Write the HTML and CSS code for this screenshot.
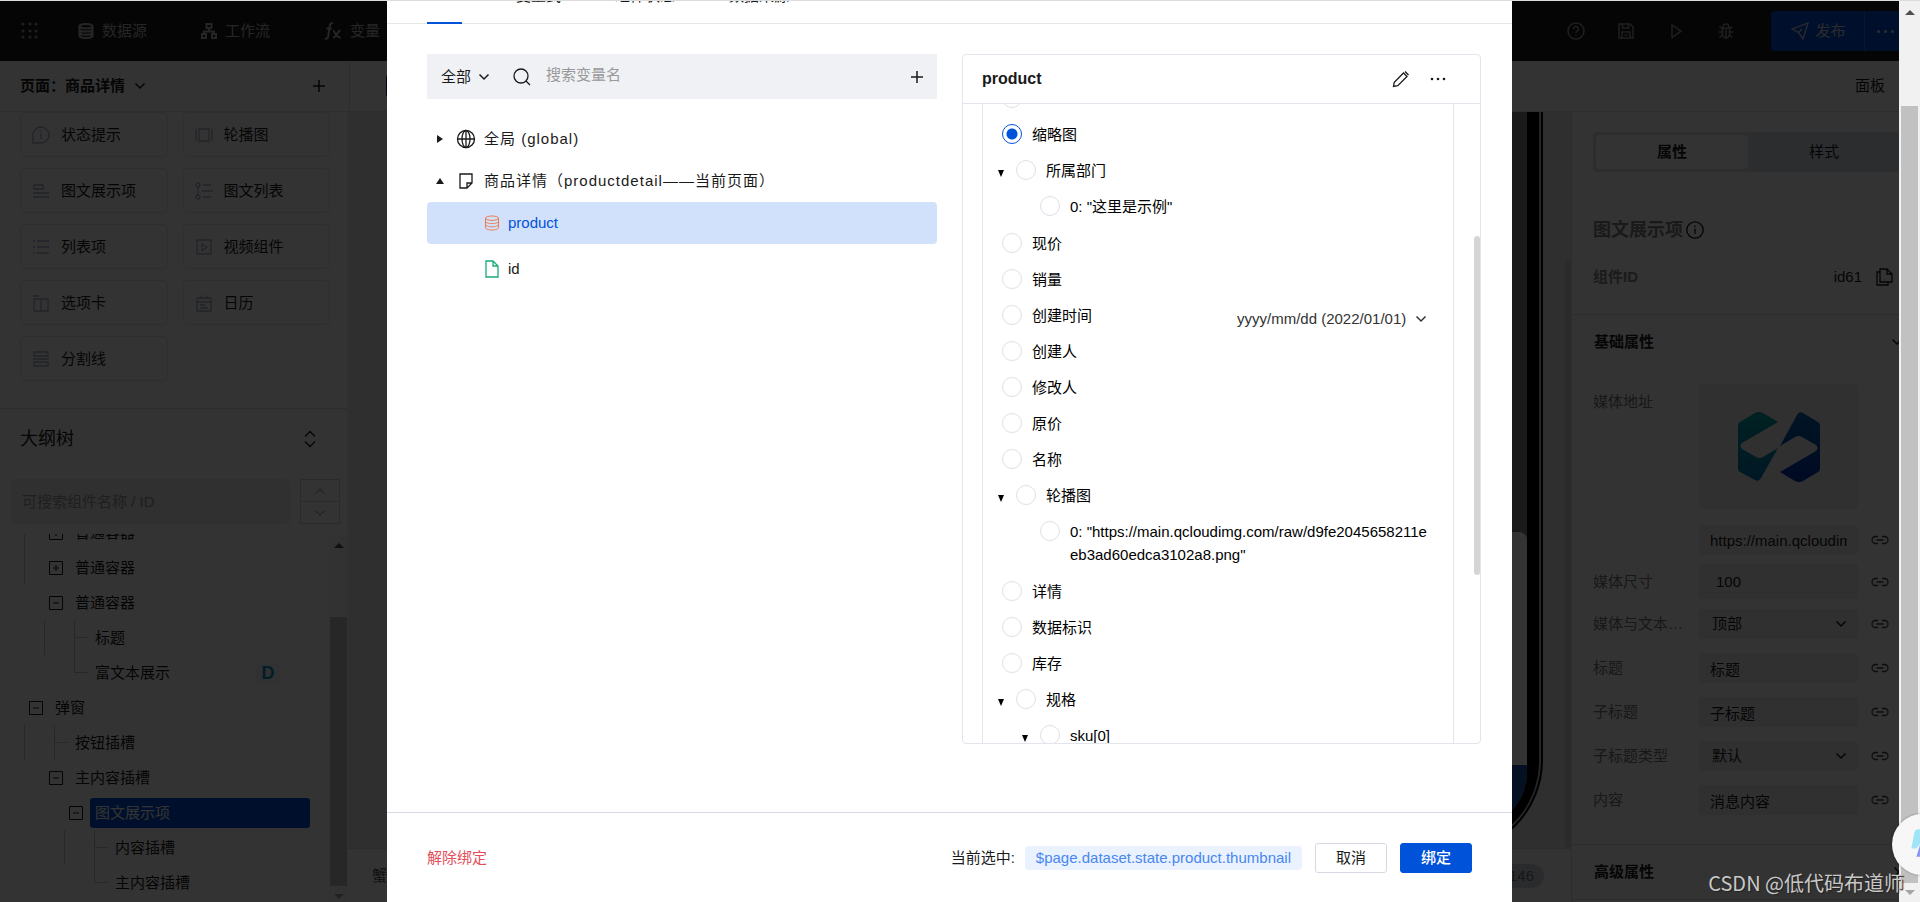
FILE: index.html
```html
<!DOCTYPE html>
<html lang="zh-CN">
<head>
<meta charset="utf-8">
<title>变量绑定</title>
<link rel="stylesheet" href="styles.css">
</head>
<body>
<svg class="sprite" aria-hidden="true">
  <symbol id="chev" viewBox="0 0 12 12"><path d="M1.500 3.500l4.500 4.500 4.500-4.500"/></symbol>
  <symbol id="plus" viewBox="0 0 12 12"><path d="M6 0v12M0 6h12"/></symbol>
  <symbol id="db" viewBox="0 0 16 16"><ellipse cx="8" cy="3.200" rx="6.500" ry="2.200"/><path d="M1.500 3.200v9.600c0 1.200 2.900 2.200 6.500 2.200s6.500-1 6.500-2.200V3.200M1.500 6.400c0 1.200 2.900 2.200 6.500 2.200s6.500-1 6.500-2.200M1.500 9.600c0 1.200 2.900 2.200 6.500 2.200s6.500-1 6.500-2.200"/></symbol>
  <symbol id="link" viewBox="0 0 18 10"><path d="M7 1.500H4.500a3.500 3.500 0 0 0 0 7H7M11 1.500h2.500a3.500 3.500 0 0 1 0 7H11M5.500 5h7"/></symbol>
  <symbol id="minus-box" viewBox="0 0 14 14"><path d="M.5.5h13v13H.5zM4 7h6"/></symbol>
  <symbol id="plus-box" viewBox="0 0 14 14"><path d="M.5.5h13v13H.5zM4 7h6M7 4v6"/></symbol>
</svg>

<div class="stage">
  <div class="app">
    <header class="topbar">
      <svg class="i dots" viewBox="0 0 18 18"><g fill="currentColor" stroke="none"><circle cx="2" cy="2" r="1.500"/><circle cx="9" cy="2" r="1.500"/><circle cx="15" cy="2" r="1.500"/><circle cx="2" cy="9" r="1.500"/><circle cx="9" cy="9" r="1.500"/><circle cx="15" cy="9" r="1.500"/><circle cx="2" cy="15" r="1.500"/><circle cx="9" cy="15" r="1.500"/><circle cx="15" cy="15" r="1.500"/></g></svg>
      <nav class="topnav">
        <a href="#"><svg class="i i16 bold"><use href="#db"/></svg>数据源</a>
        <a href="#"><svg class="i i16 bold" viewBox="0 0 16 16"><path d="M5.500 1h5v4h-5zM1 11h4v4H1zM11 11h4v4h-4zM8 5v3.500M3 11V8.500h10V11"/></svg>工作流</a>
        <a href="#"><svg class="i i18 bold" viewBox="0 0 18 18"><path d="M9 1.500C6 .5 5.800 3 5.400 6L4.300 14c-.4 2.600-1.500 3.200-3.500 2.500M2.500 6.500h5.500M9 8.500c2 0 2.500 7.500 7.500 7M16.500 8.500c-3 0-4 7.500-7.500 7"/></svg>变量</a>
      </nav>
      <div class="tools">
        <svg class="i i18" viewBox="0 0 18 18"><circle cx="9" cy="9" r="8"/><path d="M6.500 7a2.500 2.500 0 1 1 3.600 2.200c-.8.4-1.100.8-1.100 1.800M9 12.500v1.300"/></svg>
        <svg class="i i18" viewBox="0 0 18 18"><path d="M2 2h11l3 3v11H2zM5.500 2v4h6V2M5 16v-6h8v6M7.500 13h3"/></svg>
        <svg class="i i18" viewBox="0 0 18 18"><path d="M5 3v12.500l9-6.300z"/></svg>
        <svg class="i i18" viewBox="0 0 18 18"><path d="M5.500 6h7v6a3.500 4 0 0 1-7 0zM6 5.500a3 3.500 0 0 1 6 0M9 7v8.500M1.500 10h4M12.500 10h4M2.500 4.500l3 2.500M15.500 4.500l-3 2.500M2.500 15.500l3-2.500M15.500 15.500l-3-2.500"/></svg>
      </div>
      <button class="publish"><svg class="i i18" viewBox="0 0 18 18"><path d="M1 7L17 1l-5 16-4.500-6.500zM7.500 10.500L11 7"/></svg>发布</button>
      <button class="publish-more" aria-label="更多"><span></span><span></span><span></span></button>
    </header>

    <div class="subbar">
      <div class="page-pick"><strong>页面：商品详情</strong><svg class="i i12"><use href="#chev"/></svg><svg class="i i12 end"><use href="#plus"/></svg></div>
      <div class="subbar-main"><span class="device"></span><span class="end">面板</span></div>
    </div>

    <div class="work">
      <aside class="left">
        <div class="parts">
          <div class="part"><svg class="i i18" viewBox="0 0 18 18"><path d="M1 17v-8a8 8 0 1 1 8 8zM9 7.500V13M9 4.500v1.500"/></svg>状态提示</div>
          <div class="part"><svg class="i i18" viewBox="0 0 18 18"><path d="M4 3h10v12H4zM1 3v12M17 3v12"/></svg>轮播图</div>
          <div class="part"><svg class="i i18" viewBox="0 0 18 18"><path d="M2 3h9v4H2zM1 11h16M1 15h16"/></svg>图文展示项</div>
          <div class="part"><svg class="i i18" viewBox="0 0 18 18"><circle cx="3" cy="3" r="2"/><circle cx="3" cy="15" r="2"/><path d="M3 5v8M8 3h8M7 9h11M8 15h8"/></svg>图文列表</div>
          <div class="part"><svg class="i i18" viewBox="0 0 18 18"><path d="M1 3h2M5 3h12M1 9h2M5 9h12M1 15h2M5 15h12"/></svg>列表项</div>
          <div class="part"><svg class="i i18" viewBox="0 0 18 18"><path d="M2 2h14v14H2zM7 6v6.500l5-3.300z"/></svg>视频组件</div>
          <div class="part"><svg class="i i18" viewBox="0 0 18 18"><path d="M2 5h14v12H2zM9 5v12M1 2h6"/></svg>选项卡</div>
          <div class="part"><svg class="i i18" viewBox="0 0 18 18"><path d="M2 4h14v13H2zM2 8h14M6 1.500V5M12 1.500V5M5 11h5M5 14h8"/></svg>日历</div>
          <div class="part"><svg class="i i18" viewBox="0 0 18 18"><path d="M2 2h14v4H2zM2 12h14v4H2zM1 9h16"/></svg>分割线</div>
        </div>
        <div class="outline-head"><h2>大纲树</h2><svg class="i i18" viewBox="0 0 18 18"><path d="M4 6.500L9 1.500l5 5M4 11.500l5 5 5-5"/></svg></div>
        <div class="outline-search">
          <input type="text" aria-label="搜索组件" placeholder="可搜索组件名称 / ID">
          <div class="stepper"><button aria-label="上一个"><svg class="i i12 flip"><use href="#chev"/></svg></button><button aria-label="下一个"><svg class="i i12"><use href="#chev"/></svg></button></div>
        </div>
        <div class="outline">
          <ul class="otree">
            <li class="l2"><i class="rail on"></i><svg class="i i14"><use href="#plus-box"/></svg><span>普通容器</span></li>
            <li class="l2"><i class="rail on"></i><svg class="i i14"><use href="#plus-box"/></svg><span>普通容器</span></li>
            <li class="l2"><i class="rail"></i><svg class="i i14"><use href="#minus-box"/></svg><span>普通容器</span></li>
            <li class="l3"><i class="rail wide on"></i><i class="twig mid"></i><span>标题</span></li>
            <li class="l3"><i class="rail wide"></i><i class="twig"></i><span>富文本展示</span><b class="badge">D</b></li>
            <li class="l1"><i class="rail"></i><svg class="i i14"><use href="#minus-box"/></svg><span>弹窗</span></li>
            <li class="l2"><i class="rail wide on"></i><i class="twig mid"></i><span>按钮插槽</span></li>
            <li class="l2"><i class="rail"></i><svg class="i i14"><use href="#minus-box"/></svg><span>主内容插槽</span></li>
            <li class="l3"><i class="rail"></i><svg class="i i14"><use href="#minus-box"/></svg><span class="picked">图文展示项</span></li>
            <li class="l4"><i class="rail wide on"></i><i class="twig mid"></i><span>内容插槽</span></li>
            <li class="l4"><i class="rail wide"></i><i class="twig"></i><span>主内容插槽</span></li>
          </ul>
          <div class="bar bar-left"><i class="tri up"></i><i class="thumb"></i><i class="tri down"></i></div>
        </div>
      </aside>

      <main class="canvas">
        <div class="board">
          <div class="phone"><div class="bezel"><div class="screen"><div class="sheet"></div></div></div></div>
          <i class="board-thumb"></i>
        </div>
        <div class="crumbs"><span>蟹</span><b>146</b></div>
      </main>

      <aside class="right">
        <div class="seg"><button class="on">属性</button><button>样式</button></div>
        <h3>图文展示项<svg class="i i18" viewBox="0 0 18 18"><circle cx="9" cy="9" r="8.200"/><path d="M9 7.500V13M9 4.500v1.500"/></svg></h3>
        <div class="idrow"><strong>组件ID</strong><span>id61</span><svg class="i i18" viewBox="0 0 18 18"><path d="M5 1h7l5 5v8H5zM12 1v5h5M5 4H2v13h11v-3"/></svg></div>
        <div class="group"><strong>基础属性</strong><svg class="i i12"><use href="#chev"/></svg></div>
        <div class="fields">
          <div class="field tall"><span class="lab">媒体地址</span>
            <div class="pic"><svg viewBox="0 0 82 70"><defs><linearGradient id="ga" x1="0" y1="0" x2="0" y2="1"><stop offset="0" stop-color="#00a3a3"/><stop offset="1" stop-color="#0077b8"/></linearGradient><linearGradient id="gb" x1="0" y1="0" x2="0" y2="1"><stop offset="0" stop-color="#0068b8"/><stop offset="1" stop-color="#0030b0"/></linearGradient></defs>
              <path fill="url(#ga)" d="M2 10L17 1q4-2 8 0l15 9-36 21q-3 3 0 6l14 8q3 2 7 0l15-9-17 30q-2 4-6 2L2 60q-2-1-2-4V14q0-3 2-4z"/>
              <path fill="url(#gb)" d="M80 60L65 69q-4 2-8 0l-15-9 36-21q3-3 0-6l-14-8q-3-2-7 0l-15 9L59 3q2-4 6-2l15 9q2 1 2 4v42q0 3-2 4z"/></svg></div></div>
          <div class="field"><label class="lab" for="f0"></label><input id="f0" aria-label="媒体地址" value="https://main.qcloudimg.com"><svg class="i lk"><use href="#link"/></svg></div>
          <div class="field big"><label class="lab" for="f1">媒体尺寸</label><input id="f1" value="100"><svg class="i lk"><use href="#link"/></svg></div>
          <div class="field"><label class="lab" for="f2">媒体与文本布局</label><div class="sel"><select id="f2"><option>顶部</option></select><svg class="i i12"><use href="#chev"/></svg></div><svg class="i lk"><use href="#link"/></svg></div>
          <div class="field"><label class="lab" for="f3">标题</label><input id="f3" value="标题"><svg class="i lk"><use href="#link"/></svg></div>
          <div class="field"><label class="lab" for="f4">子标题</label><input id="f4" value="子标题"><svg class="i lk"><use href="#link"/></svg></div>
          <div class="field"><label class="lab" for="f5">子标题类型</label><div class="sel"><select id="f5"><option>默认</option></select><svg class="i i12"><use href="#chev"/></svg></div><svg class="i lk"><use href="#link"/></svg></div>
          <div class="field"><label class="lab" for="f6">内容</label><input id="f6" value="消息内容"><svg class="i lk"><use href="#link"/></svg></div>
        </div>
        <div class="group last"><strong>高级属性</strong><svg class="i i12 turn"><use href="#chev"/></svg></div>
      </aside>
    </div>
  </div>

  <div class="mask">
    <section class="modal" role="dialog" aria-label="变量绑定">
      <nav class="tabs"><button class="on" aria-label="变量"></button><button>变量式</button><button>组件状态</button><button>数据来源</button></nav>
      <div class="body">
        <div class="vars">
          <div class="search">
            <div class="scope"><select aria-label="范围"><option>全部</option></select><svg class="i i12"><use href="#chev"/></svg></div>
            <svg class="i i18" viewBox="0 0 18 18"><circle cx="8" cy="8" r="7"/><path d="M13 13l4 4"/></svg>
            <input type="text" aria-label="搜索变量名" placeholder="搜索变量名">
            <button class="plain" aria-label="新增"><svg class="i i12"><use href="#plus"/></svg></button>
          </div>
          <ul class="vtree">
            <li class="node"><i class="car side"></i><svg class="i i20" viewBox="0 0 20 20"><circle cx="10" cy="10" r="8.500"/><ellipse cx="10" cy="10" rx="4" ry="8.500"/><path d="M1.500 10h17M10 1.500v17"/></svg><span>全局 (global)</span></li>
            <li class="node"><i class="car top"></i><svg class="i i20" viewBox="0 0 20 20"><path d="M4 3h12v9l-5 5H4zM16 12h-5v5"/></svg><span>商品详情（productdetail——当前页面）</span></li>
            <li class="leaf on"><svg class="i i16 orange"><use href="#db"/></svg>product</li>
            <li class="leaf"><svg class="i i18 green" viewBox="0 0 16 18"><path d="M2 1h7l5 5v11H2zM9 1v5h5"/></svg>id</li>
          </ul>
        </div>

        <div class="detail">
          <div class="detail-head"><h2>product</h2>
            <button class="plain" aria-label="编辑"><svg class="i i18" viewBox="0 0 18 18"><path d="M1.500 16.500l.8-4.300L11.500 3l3.500 3.500-9.200 9.200zM13 1.500L16.500 5"/></svg></button>
            <button class="plain" aria-label="更多"><svg class="i i16" viewBox="0 0 16 16"><g fill="currentColor" stroke="none"><circle cx="2" cy="8" r="1.300"/><circle cx="8" cy="8" r="1.300"/><circle cx="14" cy="8" r="1.300"/></g></svg></button>
          </div>
          <div class="detail-body">
            <ul class="props">
              <li><label class="prop"><input type="radio" name="p" aria-label="标识"></label></li>
              <li><label class="prop"><input type="radio" name="p" checked><span>缩略图</span></label></li>
              <li><label class="prop open"><i class="caret"></i><input type="radio" name="p"><span>所属部门</span></label>
                <ul><li><label class="prop"><input type="radio" name="p"><span>0: "这里是示例"</span></label></li></ul></li>
              <li><label class="prop"><input type="radio" name="p"><span>现价</span></label></li>
              <li><label class="prop"><input type="radio" name="p"><span>销量</span></label></li>
              <li class="dated"><label class="prop"><input type="radio" name="p"><span>创建时间</span></label>
                <div class="fmt"><select aria-label="时间格式"><option>yyyy/mm/dd (2022/01/01)</option></select><svg class="i i12"><use href="#chev"/></svg></div></li>
              <li><label class="prop"><input type="radio" name="p"><span>创建人</span></label></li>
              <li><label class="prop"><input type="radio" name="p"><span>修改人</span></label></li>
              <li><label class="prop"><input type="radio" name="p"><span>原价</span></label></li>
              <li><label class="prop"><input type="radio" name="p"><span>名称</span></label></li>
              <li><label class="prop open"><i class="caret"></i><input type="radio" name="p"><span>轮播图</span></label>
                <ul><li><label class="prop"><input type="radio" name="p"><span>0: "https://main.qcloudimg.com/raw/d9fe2045658211eeb3ad60edca3102a8.png"</span></label></li></ul></li>
              <li><label class="prop"><input type="radio" name="p"><span>详情</span></label></li>
              <li><label class="prop"><input type="radio" name="p"><span>数据标识</span></label></li>
              <li><label class="prop"><input type="radio" name="p"><span>库存</span></label></li>
              <li><label class="prop open"><i class="caret"></i><input type="radio" name="p"><span>规格</span></label>
                <ul><li><label class="prop open"><i class="caret"></i><input type="radio" name="p"><span>sku[0]</span></label></li></ul></li>
            </ul>
            <i class="detail-thumb"></i>
          </div>
        </div>
      </div>
      <footer class="foot">
        <button class="unbind">解除绑定</button>
        <span class="cur">当前选中:</span><code>$page.dataset.state.product.thumbnail</code>
        <button class="btn">取消</button><button class="btn primary">绑定</button>
      </footer>
    </section>
  </div>
</div>

<div class="bar bar-page"><i class="tri up"></i><i class="thumb"></i><i class="tri down"></i></div>
<div class="fab"><svg viewBox="0 0 60 60"><path fill="#a0e4f7" d="M22 18q1-3 4-3h34v14H28l-4 5h-5z"/><path fill="#8a96f5" d="M28 29h32v13H24z"/></svg></div>
<div class="mark">CSDN @低代码布道师</div>
</body>
</html>
```
FILE: styles.css
```css
* { box-sizing: border-box; }
html, body { height: 100%; }
body {
  margin: 0;
  display: flex;
  position: relative;
  overflow: hidden;
  border-top: 1px solid #dcdcdc;
  font: 15px/24px "Liberation Sans", "Noto Sans CJK SC", sans-serif;
  color: #1a1a1a;
}
ul { list-style: none; margin: 0; padding: 0; }
h2, h3 { margin: 0; }
button, input, select { font: inherit; color: inherit; margin: 0; }
button, select { appearance: none; border: 0; background: none; padding: 0; }
a { color: inherit; text-decoration: none; }
.sprite { position: absolute; width: 0; height: 0; }
.i { fill: none; stroke: currentColor; flex: none; display: block; }
.i.bold { stroke-width: 2; }
.i12 { width: 12px; height: 12px; stroke-width: 1.500; }
.i14 { width: 14px; height: 14px; }
.i16 { width: 16px; height: 16px; }
.i18 { width: 18px; height: 18px; stroke-width: 1.300; }
.i20 { width: 20px; height: 20px; stroke-width: 1.300; }
.flip { transform: rotate(180deg); }
.turn { transform: rotate(-90deg); }
.end { margin-left: auto; }

.stage { position: relative; flex: 1; min-width: 0; overflow: hidden; }
.app { height: 100%; display: flex; flex-direction: column; background: #fff; }

.topbar { flex: none; height: 60px; display: flex; align-items: center; background: #1a1a1a; color: #d8d8d8; overflow: hidden; }
.dots { width: 18px; height: 18px; margin: 0 39px 0 21px; color: #999; }
.topnav { display: flex; gap: 54px; }
.topnav a { display: flex; align-items: center; gap: 8px; color: #bbb; }
.topnav .i { stroke-width: 2; }
.tools { display: flex; gap: 32px; margin: 0 36px 0 auto; color: #999; }
.tools .i { stroke-width: 1.500; }
.publish { height: 40px; width: 94px; display: flex; align-items: center; justify-content: center; gap: 6px; padding-left: 2px; background: #0052d9; border-radius: 4px 0 0 4px; border-right: 1px solid #2a6ae0; }
.publish-more { height: 40px; width: 34px; display: flex; align-items: center; gap: 4px; padding-left: 12px; background: #0052d9; }
.publish-more span { width: 3px; height: 3px; border-radius: 50%; background: #ddd; }

.subbar { flex: none; display: flex; height: 51px; border-bottom: 1px solid #e2e2e2; }
.page-pick { width: 349px; display: flex; align-items: center; gap: 9px; padding: 0 24px 0 20px; }
.subbar-main { flex: 1; display: flex; align-items: center; padding: 0 14px 0 36px; border-left: 1px solid #e2e2e2; }
.device { width: 12px; height: 22px; border-radius: 3px; background: #101060; }

.work { flex: 1; min-height: 0; display: flex; }
.left { flex: none; width: 348px; display: flex; flex-direction: column; border-right: 1px solid #f2f2f2; }
.parts { display: grid; grid-template-columns: 1fr 1fr; gap: 11px 15px; padding: 0 17px 27px 20px; border-bottom: 1px solid #dcdcdc; }
.part { height: 45px; display: flex; align-items: center; gap: 11px; padding-left: 11px; border: 1px solid #e6e6e6; border-radius: 4px; }
.part .i { color: #a0aec4; }
.outline-head { display: flex; align-items: center; justify-content: space-between; height: 60px; padding: 0 28px 0 20px; }
.outline-head h2 { font-size: 18px; font-weight: 400; }
.outline-search { display: flex; gap: 10px; padding: 10px 7px 10px 10px; }
.outline-search input { flex: 1; min-width: 0; height: 45px; border: 0; border-radius: 4px; padding: 0 12px; background: #f0f0f0; }
.outline-search input::placeholder { color: #999; }
.stepper { width: 40px; display: grid; border: 1px solid #d8d8d8; }
.stepper button { display: grid; place-items: center; color: #bbb; }
.stepper button + button { border-top: 1px solid #d8d8d8; }
.outline { flex: 1; min-height: 0; display: flex; overflow: hidden; }
.otree { flex: 1; margin-top: -19px; }
.otree li { height: 35px; display: flex; align-items: center; }
.l1 { padding-left: 4px; }
.l2 { padding-left: 24px; }
.l3 { padding-left: 44px; }
.l4 { padding-left: 64px; }
.rail { width: 25px; align-self: stretch; border-left: 1px solid transparent; }
.rail.wide { width: 30px; }
.rail.on { border-left-color: #c8c8c8; }
.otree .i14 { margin-right: 7px; }
.otree span { padding: 3px 5px; line-height: 24px; }
.twig { width: 14px; align-self: stretch; margin-right: 2px; background: linear-gradient(#c8c8c8, #c8c8c8) 0 17px / 14px 1px no-repeat, linear-gradient(#c8c8c8, #c8c8c8) 0 0 / 1px 18px no-repeat; }
.twig.mid { background-size: 14px 1px, 1px 35px; }
.otree .picked { flex: 1; margin-right: 19px; background: #0052d9; color: #fff; border-radius: 3px; }
.badge { margin: 0 49px 0 auto; width: 24px; text-align: center; border-radius: 4px; background: #f0f5fa; color: #0e8cc8; font-size: 18px; line-height: 20px; }

.bar { display: flex; flex-direction: column; align-items: center; background: #f1f1f1; }
.bar .thumb { background: #c1c1c1; }
.tri { border: 5px solid transparent; height: 0; width: 0; }
.tri.up { border-top: 0; border-bottom-color: #505050; }
.tri.down { border-bottom: 0; border-top-color: #a3a3a3; }
.bar-left { width: 18px; padding: 9px 0 3px 1px; background: #f8f8f8; }
.bar-left .thumb { align-self: stretch; flex: 1; margin: 69px 0 8px; }
.bar-page { flex: none; width: 21px; padding: 9px 2px 7px; }
.bar-page .thumb { align-self: stretch; flex: 1; margin: 91px 0 7px; }

.canvas { flex: 1; min-width: 0; display: flex; flex-direction: column; }
.board { position: relative; flex: 1; overflow: hidden; background: #ebebeb; }
.phone { position: absolute; right: 28px; top: -120px; bottom: -6px; width: 440px; padding: 3px 2px; border: 2px solid #000; border-radius: 94px; background: #bbb; }
.bezel { height: 100%; padding: 0 6px 16px; border-radius: 88px; background: #000; }
.screen { height: 100%; border: 6px solid #000; border-radius: 60px; background: #808080; overflow: hidden; display: flex; flex-direction: column; justify-content: flex-end; }
.sheet { height: 295px; border-radius: 8px 8px 0 0; background: linear-gradient(#fff 233px, #1a4fa8 233px); }
.board-thumb { position: absolute; right: 0; top: 148px; bottom: 0; width: 6px; border-radius: 3px; background: #d4d4d4; }
.crumbs { height: 54px; display: flex; align-items: center; padding: 0 27px 0 24px; border-top: 1px solid #ddd; color: #555; }
.crumbs b { margin-left: auto; width: 64px; padding-right: 10px; text-align: right; font-weight: 400; border-radius: 13px; background: #d0d5e0; color: #777; }

.right { flex: none; width: 328px; overflow: hidden; display: flex; flex-direction: column; border-left: 1px solid #e0e0e0; }
.seg { display: flex; margin: 20px -4px 0 21px; padding: 3px; background: #dce2ea; border-radius: 4px; }
.seg button { flex: 1; height: 34px; border-radius: 4px; }
.seg .on { background: #fff; font-weight: 700; }
.right h3 { display: flex; align-items: center; gap: 3px; margin: 45px 0 0 21px; color: #808080; font-size: 18px; line-height: 26px; }
.right h3 .i { color: #1a1a1a; }
.idrow { display: flex; align-items: center; gap: 13px; height: 72px; padding: 0 6px 4px 21px; border-bottom: 1px solid #ddd; }
.idrow strong { flex: 1; color: #888; }
.group { display: flex; align-items: center; justify-content: space-between; height: 53px; margin-right: -4px; padding-left: 22px; }
.group.last { border-top: 1px solid #ddd; border-bottom: 1px solid #ddd; height: 56px; margin-top: auto; margin-bottom: 2px; }
.fields { display: grid; gap: 14px; margin-top: 16px; padding: 0 10px 0 21px; }
.field { display: flex; align-items: center; min-height: 30px; }
.lab { flex: none; width: 91px; margin-right: 15px; color: #777; overflow: hidden; text-overflow: ellipsis; white-space: nowrap; }
.tall { align-items: flex-start; margin-bottom: 2px; }
.tall .lab { padding-top: 6px; }
.pic { width: 159px; height: 125px; display: grid; place-items: center; background: #f0f0f0; border-radius: 4px; }
.pic svg { width: 82px; height: 70px; }
.field > input, .sel { flex: none; width: 159px; height: 30px; border: 0; border-radius: 3px; background: #f0f0f0; padding: 0 11px; }
.big { margin: -5px 0 -4px; }
.field.big > input { height: 35px; padding: 0 16px; border: 1px solid #e8e8e8; }
.sel { display: flex; align-items: center; padding: 0 11px 0 13px; }
.sel select { flex: 1; }
.lk { width: 18px; height: 10px; margin-left: 13px; stroke-width: 1.300; color: #444; }

.mask { position: absolute; inset: 0; display: flex; justify-content: center; background: rgba(0, 0, 0, .8); }
.modal { width: 1125px; display: flex; flex-direction: column; background: #fff; }
.tabs { flex: none; display: flex; align-items: flex-start; gap: 54px; height: 23px; padding: 0 40px; border-bottom: 1px solid #e7e7e7; }
.tabs button { display: flex; align-items: flex-end; height: 2px; overflow: hidden; line-height: 14px; }
.tabs .on { width: 35px; height: 23px; border-bottom: 2px solid #0052d9; }
.body { flex: 1; min-height: 0; display: flex; gap: 25px; padding: 30px 31px 68px 40px; }
.vars { flex: 1; min-width: 0; }
.search { display: flex; align-items: center; height: 45px; padding: 0 14px; background: #f0f1f5; }
.scope { display: flex; align-items: center; gap: 6px; margin-right: 23px; }
.search input { flex: 1; min-width: 0; border: 0; background: none; padding: 0 0 3px 15px; }
.search input::placeholder { color: #999; }
.vtree { padding-top: 19px; }
.node { display: flex; align-items: center; height: 42px; padding-left: 8px; }
.node span { letter-spacing: 1px; }
.node .i20 { margin: 0 8px 0 11px; }
.car { width: 10px; height: 10px; background: #1a1a1a; }
.side { clip-path: polygon(20% 10%, 20% 90%, 80% 50%); }
.top { clip-path: polygon(10% 80%, 90% 80%, 50% 20%); }
.leaf { display: flex; align-items: center; gap: 8px; height: 42px; padding-left: 57px; border-radius: 4px; }
.leaf.on { background: #d2e1fb; color: #0052d9; margin-bottom: 4px; }
.leaf .i18 { width: 16px; }
.orange { color: #ed7b4a; }
.green { color: #1aab7a; }

.detail { flex: none; width: 519px; display: flex; flex-direction: column; border: 1px solid #e2e5eb; border-radius: 4px; overflow: hidden; }
.detail-head { flex: none; display: flex; align-items: center; gap: 20px; height: 49px; padding: 0 34px 0 19px; border-bottom: 1px solid #e2e5eb; }
.detail-head h2 { flex: 1; font-size: 16px; }
.detail-body { position: relative; flex: 1; min-height: 0; padding: 0 26px 0 19px; overflow: hidden; }
.detail-thumb { position: absolute; right: 0; top: 132px; width: 6px; height: 339px; border-radius: 3px; background: #d5d5d5; }
.props { margin-top: -23px; border: solid #e2e5eb; border-width: 0 1px; color: #000; }
.props ul { margin-bottom: 1px; }
.prop { display: flex; align-items: flex-start; gap: 10px; min-height: 36px; padding: 6px 24px 7px 19px; line-height: 23px; word-break: break-all; }
.prop input { appearance: none; flex: none; width: 20px; height: 20px; margin: 1px 0 0; border: 1px solid #dcdfe6; border-radius: 50%; background: #fff; }
.prop input:checked { border-color: #0052d9; background: radial-gradient(circle, #0052d9 5px, #fff 6px); }
.prop.open { padding-left: 15px; }
.caret { flex: none; width: 6px; height: 7px; margin: 11px 2px 0 0; background: #000; clip-path: polygon(0 0, 100% 0, 50% 100%); }
.props ul .prop { padding-left: 57px; }
.props ul .prop.open { padding-left: 39px; }
.dated { display: flex; justify-content: space-between; }
.fmt { display: flex; align-items: center; gap: 8px; margin: 6px 26px 0 0; color: #333; }
.foot { flex: none; display: flex; align-items: center; height: 90px; padding: 0 40px; border-top: 1px solid #d6dae3; }
.unbind { margin-right: auto; color: #e34d59; }
.foot code { font: inherit; margin: 0 13px 0 10px; padding: 0 11px; border-radius: 4px; background: #ebf2ff; color: #4787f0; }
.btn { width: 72px; height: 30px; border: 1px solid #d5d9e2; border-radius: 3px; background: #fff; }
.btn.primary { margin-left: 13px; background: #0052d9; border-color: #0052d9; color: #fff; font-weight: 500; }
.fab { position: absolute; right: -33px; top: 813px; width: 61px; height: 61px; border-radius: 50%; background: #f7f7f7; box-shadow: 0 0 3px rgba(0, 0, 0, .3); }
.mark { position: absolute; right: 16px; bottom: 5px; font: 20px/28px "Noto Sans CJK SC", sans-serif; color: #c8c8c8; text-shadow: 1px 1px 1px #222; }
```
